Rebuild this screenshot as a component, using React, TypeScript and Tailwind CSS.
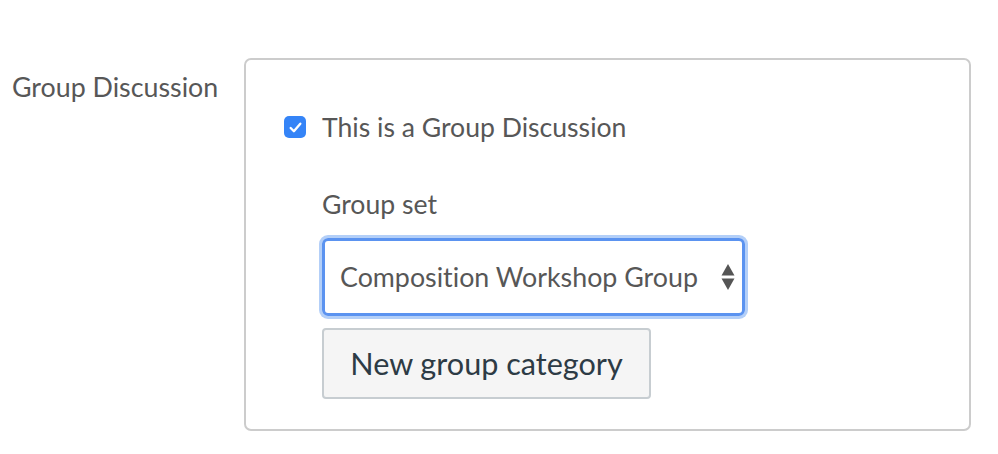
import React from "react"

export default function App() {
  return (
    <div className="w-[998px] h-[454px] bg-white font-['Lato',sans-serif] text-[#575757] overflow-hidden [font-variant-ligatures:none]">
      <div className="flex pt-[58px]">
        <div className="w-[244px] pl-[12px] pt-[13px] text-[26.8px] leading-[32px]">Group Discussion</div>
        <div className="w-[727px] h-[373px] border-2 border-[#cccccc] rounded-[7px] pl-[38px] pt-[51px]">
          <label className="flex items-center gap-[16px] text-[26.6px] leading-[32px]">
            <span className="w-[22px] h-[22px] rounded-[5px] bg-[#3584f7] flex items-center justify-center">
              <svg width="15" height="15" viewBox="0 0 14 14" fill="none">
                <path d="M2.5 7.5l3 3 6-7" stroke="white" strokeWidth="2.2" strokeLinecap="round" strokeLinejoin="round" />
              </svg>
            </span>
            This is a Group Discussion
          </label>
          <div className="pl-[38px] pt-[45px]">
            <div className="text-[26.6px] leading-[32px]">Group set</div>
            <div className="mt-[18px] w-[423px] h-[78px] rounded-[6px] border-[3px] border-[#5b93f0] shadow-[0_0_0_3px_#b3cff8] flex items-center justify-between pl-[15px] pr-[7px] text-[26.8px]">
              <span>Composition Workshop Group</span>
              <svg width="14" height="28" viewBox="0 0 14 28">
                <path d="M7 1L13.5 12.5H0.5z" fill="#555" />
                <path d="M7 27L13.5 15.5H0.5z" fill="#555" />
              </svg>
            </div>
            <button className="mt-[12px] w-[329px] h-[71px] rounded-[4px] border-2 border-[#c7cdd1] bg-[#f5f5f5] text-[30.6px] text-[#2d3b45]">
              New group category
            </button>
          </div>
        </div>
      </div>
    </div>
  )
}
